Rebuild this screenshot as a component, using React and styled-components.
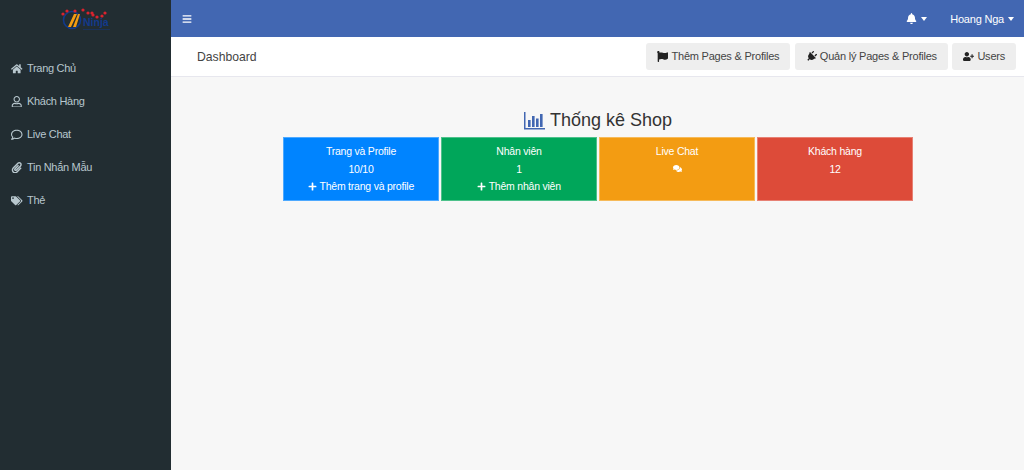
import React from "react";
import styled, { createGlobalStyle } from "styled-components";
import { FaHome, FaRegUser, FaRegComment, FaPaperclip, FaTags, FaBars, FaBell, FaFlag, FaPlug, FaUserPlus, FaPlus, FaComments } from "react-icons/fa";

const Global = createGlobalStyle`
  html, body { margin: 0; padding: 0; height: 100%; }
  body { font-family: "Liberation Sans", Arial, sans-serif; font-size: 12px; background: #f7f7f7; overflow: hidden; }
  #root { height: 100%; }
`;
const Shell = styled.div`display: flex; width: 1024px; height: 470px;`;
const Sidebar = styled.aside`width: 171px; flex: none; background: #222d32; display: flex; flex-direction: column;`;
const LogoBox = styled.div`height: 52px; padding: 8px 0 0 60px; box-sizing: border-box;`;
const Nav = styled.nav`display: flex; flex-direction: column;`;
const NavItem = styled.a`
  height: 33px; display: flex; align-items: center; padding-left: 11px;
  color: #b8c7ce; font-size: 11px; letter-spacing: -0.3px; line-height: 33px;
  svg { width: 11.5px; height: 11.5px; margin-right: 4.5px; flex: none; }
`;
const Main = styled.main`flex: 1; display: flex; flex-direction: column; min-width: 0;`;
const TopBar = styled.header`
  height: 37px; background: #4267b2; color: #fff; display: flex; align-items: center;
  justify-content: space-between; padding: 0 10px 0 11px; font-size: 11px; letter-spacing: -0.2px;
`;
const TopRight = styled.div`display: flex; align-items: center; gap: 23px;`;
const TopItem = styled.span`display: inline-flex; align-items: center; gap: 3px;`;
const Caret = styled.i`width: 0; height: 0; border-top: 4px solid #fff; border-left: 3.5px solid transparent; border-right: 3.5px solid transparent; margin-left: 1px;`;
const SubBar = styled.div`
  height: 40px; box-sizing: border-box; background: #fff; border-bottom: 1px solid #e7e7ee;
  display: flex; align-items: center; justify-content: space-between; padding: 0 8px 0 26px;
`;
const Crumb = styled.h1`margin: 0; font-size: 12.2px; font-weight: 400; color: #444;`;
const Actions = styled.div`display: flex; gap: 4.5px; margin-top: -1px;`;
const ActionButton = styled.button`
  height: 27px; padding: 0 11px; border: 0; border-radius: 3px; background: #eee; color: #444;
  font: 11px "Liberation Sans", Arial, sans-serif; letter-spacing: -0.22px; display: inline-flex; align-items: center; gap: 3px;
  svg { width: 11px; height: 11px; color: #222; flex: none; }
`;
const PlugIcon = styled(FaPlug)`transform: rotate(45deg);`;
const Content = styled.section`flex: 1; display: flex; flex-direction: column; align-items: center; padding: 31px 0 0 1px;`;
const Title = styled.h2`
  margin: 0 0 4px; height: 25px; font-size: 18px; line-height: 25px; font-weight: 400; color: #333;
  display: flex; align-items: center; gap: 5px;
`;
const Cards = styled.div`display: grid; grid-template-columns: repeat(4, 156px); gap: 2px; width: 630px;`;
const Card = styled.div`
  height: 64px; box-sizing: border-box; padding-top: 5px; background: ${p => p.$bg};
  color: #fff; text-align: center; font-size: 10.5px; letter-spacing: -0.22px; line-height: 17.5px;
  border: 1px solid rgba(255,255,255,.3);
  svg { width: 9px; height: 9px; vertical-align: -0.5px; }
`;
const CardLine = styled.div``;

const ChartIcon = () => (
  <svg width="21" height="21" viewBox="0 0 21 21" aria-hidden="true" fill="#4267b2">
    <path d="M0 2h1.5v16H21v1.5H0z" />
    <rect x="4" y="10" width="2.6" height="7" />
    <rect x="8" y="6" width="2.6" height="11" />
    <rect x="12" y="8.5" width="2.6" height="8.5" />
    <rect x="16" y="4" width="2.6" height="13" />
  </svg>
);

const Logo = () => (
  <svg width="52" height="26" viewBox="0 0 52 26" aria-label="Ninja logo">
    <circle cx="12" cy="12" r="8.5" fill="none" stroke="#123a8c" strokeWidth="1.6" />
    <path d="M8 19 L14 6 H17 L11 19Z M13 19 L18 6 H20 L16 19Z" fill="#f39c12" />
    {[[3,6],[7,3],[15,3],[23,2],[28,5],[32,5],[33,7],[37,9],[42,8],[45,5]].map(([x, y], i) => (
      <circle key={i} cx={x} cy={y} r="1.6" fill="#d9232e" />
    ))}
    <text x="23" y="18" fontFamily="Liberation Sans" fontWeight="700" fontSize="10.5" fill="#123a8c">Ninja</text>
    <rect x="23" y="21" width="27" height="1" fill="#123a8c" opacity=".45" />
  </svg>
);

const navItems = [
  [FaHome, "Trang Chủ"], [FaRegUser, "Khách Hàng"], [FaRegComment, "Live Chat"],
  [FaPaperclip, "Tin Nhắn Mẫu"], [FaTags, "Thẻ"],
];

export default function App() {
  return (
    <Shell>
      <Global />
      <Sidebar>
        <LogoBox><Logo /></LogoBox>
        <Nav>
          {navItems.map(([Icon, label]) => <NavItem key={label}><Icon />{label}</NavItem>)}
        </Nav>
      </Sidebar>
      <Main>
        <TopBar>
          <FaBars size={10} />
          <TopRight>
            <TopItem><FaBell size={11} /><Caret /></TopItem>
            <TopItem>Hoang Nga <Caret /></TopItem>
          </TopRight>
        </TopBar>
        <SubBar>
          <Crumb>Dashboard</Crumb>
          <Actions>
            <ActionButton><FaFlag />Thêm Pages &amp; Profiles</ActionButton>
            <ActionButton><PlugIcon />Quản lý Pages &amp; Profiles</ActionButton>
            <ActionButton><FaUserPlus />Users</ActionButton>
          </Actions>
        </SubBar>
        <Content>
          <Title><ChartIcon />Thống kê Shop</Title>
          <Cards>
            <Card $bg="#0084ff">
              <CardLine>Trang và Profile</CardLine>
              <CardLine>10/10</CardLine>
              <CardLine><FaPlus /> Thêm trang và profile</CardLine>
            </Card>
            <Card $bg="#00a65a">
              <CardLine>Nhân viên</CardLine>
              <CardLine>1</CardLine>
              <CardLine><FaPlus /> Thêm nhân viên</CardLine>
            </Card>
            <Card $bg="#f39c12">
              <CardLine>Live Chat</CardLine>
              <CardLine><FaComments /></CardLine>
            </Card>
            <Card $bg="#dd4b39">
              <CardLine>Khách hàng</CardLine>
              <CardLine>12</CardLine>
            </Card>
          </Cards>
        </Content>
      </Main>
    </Shell>
  );
}
